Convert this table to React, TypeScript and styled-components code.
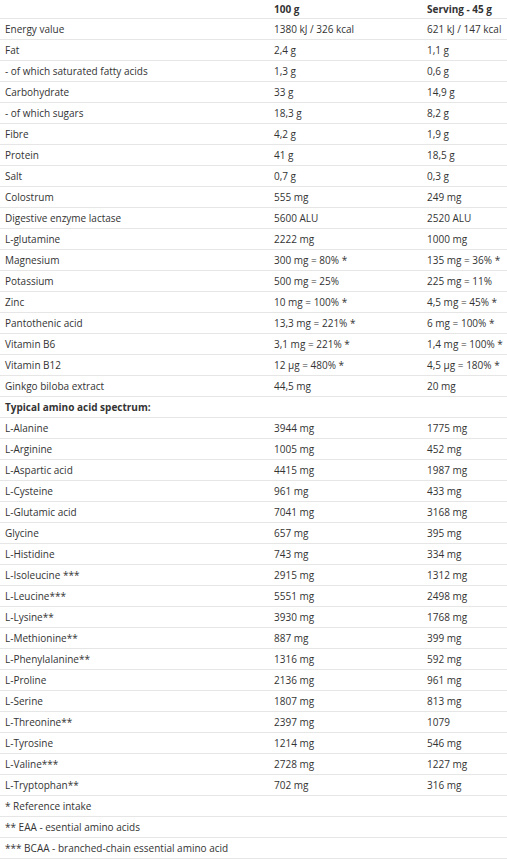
import styled, { createGlobalStyle } from "styled-components"

const GlobalStyle = createGlobalStyle`
    html, body {
        margin: 0;
        padding: 0;
        background: #fff;
    }
`

type Row = [string, string, string]

const nutrients: Row[] = [
    ["Energy value", "1380 kJ / 326 kcal", "621 kJ / 147 kcal"],
    ["Fat", "2,4 g", "1,1 g"],
    ["- of which saturated fatty acids", "1,3 g", "0,6 g"],
    ["Carbohydrate", "33 g", "14,9 g"],
    ["- of which sugars", "18,3 g", "8,2 g"],
    ["Fibre", "4,2 g", "1,9 g"],
    ["Protein", "41 g", "18,5 g"],
    ["Salt", "0,7 g", "0,3 g"],
    ["Colostrum", "555 mg", "249 mg"],
    ["Digestive enzyme lactase", "5600 ALU", "2520 ALU"],
    ["L-glutamine", "2222 mg", "1000 mg"],
    ["Magnesium", "300 mg = 80% *", "135 mg = 36% *"],
    ["Potassium", "500 mg = 25%", "225 mg = 11%"],
    ["Zinc", "10 mg = 100% *", "4,5 mg = 45% *"],
    ["Pantothenic acid", "13,3 mg = 221% *", "6 mg = 100% *"],
    ["Vitamin B6", "3,1 mg = 221% *", "1,4 mg = 100% *"],
    ["Vitamin B12", "12 µg = 480% *", "4,5 µg = 180% *"],
    ["Ginkgo biloba extract", "44,5 mg", "20 mg"],
]

const aminos: Row[] = [
    ["L-Alanine", "3944 mg", "1775 mg"],
    ["L-Arginine", "1005 mg", "452 mg"],
    ["L-Aspartic acid", "4415 mg", "1987 mg"],
    ["L-Cysteine", "961 mg", "433 mg"],
    ["L-Glutamic acid", "7041 mg", "3168 mg"],
    ["Glycine", "657 mg", "395 mg"],
    ["L-Histidine", "743 mg", "334 mg"],
    ["L-Isoleucine ***", "2915 mg", "1312 mg"],
    ["L-Leucine***", "5551 mg", "2498 mg"],
    ["L-Lysine**", "3930 mg", "1768 mg"],
    ["L-Methionine**", "887 mg", "399 mg"],
    ["L-Phenylalanine**", "1316 mg", "592 mg"],
    ["L-Proline", "2136 mg", "961 mg"],
    ["L-Serine", "1807 mg", "813 mg"],
    ["L-Threonine**", "2397 mg", "1079"],
    ["L-Tyrosine", "1214 mg", "546 mg"],
    ["L-Valine***", "2728 mg", "1227 mg"],
    ["L-Tryptophan**", "702 mg", "316 mg"],
]

const notes: string[] = [
    "* Reference intake",
    "** EAA - esential amino acids",
    "*** BCAA - branched-chain essential amino acid",
]

export default function App() {
    return (
        <>
            <GlobalStyle />
            <Table>
                <colgroup>
                    <col style={{ width: 269 }} />
                    <col style={{ width: 153 }} />
                    <col />
                </colgroup>
                <thead>
                    <HeadRow>
                        <HeadCell></HeadCell>
                        <HeadCell>100 g</HeadCell>
                        <HeadCell>Serving - 45 g</HeadCell>
                    </HeadRow>
                </thead>
                <tbody>
                    {nutrients.map(([name, a, b]) => (
                        <BodyRow key={name}>
                            <Cell>{name}</Cell>
                            <Cell>{a}</Cell>
                            <Cell>{b}</Cell>
                        </BodyRow>
                    ))}
                    <BodyRow>
                        <Cell $bold>Typical amino acid spectrum:</Cell>
                        <Cell></Cell>
                        <Cell></Cell>
                    </BodyRow>
                    {aminos.map(([name, a, b]) => (
                        <BodyRow key={name}>
                            <Cell>{name}</Cell>
                            <Cell>{a}</Cell>
                            <Cell>{b}</Cell>
                        </BodyRow>
                    ))}
                    {notes.map((n) => (
                        <BodyRow key={n}>
                            <Cell>{n}</Cell>
                            <Cell></Cell>
                            <Cell></Cell>
                        </BodyRow>
                    ))}
                </tbody>
            </Table>
        </>
    )
}

const Table = styled.table`
    width: 507px;
    border-collapse: collapse;
    table-layout: fixed;
    font-family: "Open Sans", "Noto Sans", sans-serif;
    font-size: 10px;
    color: #333;
`

const HeadRow = styled.tr`
    height: 18px;
    border-bottom: 1px solid #e6e6e6;
`

const HeadCell = styled.th`
    padding: 0 5px;
    text-align: left;
    font-weight: 700;
    white-space: nowrap;
    vertical-align: middle;
    line-height: 14px;
`

const BodyRow = styled.tr`
    height: 21px;
    border-bottom: 1px solid #e6e6e6;
`

const Cell = styled.td<{ $bold?: boolean }>`
    padding: 0 5px;
    font-weight: ${(p) => (p.$bold ? 700 : 400)};
    white-space: nowrap;
    vertical-align: middle;
    line-height: 14px;
`
